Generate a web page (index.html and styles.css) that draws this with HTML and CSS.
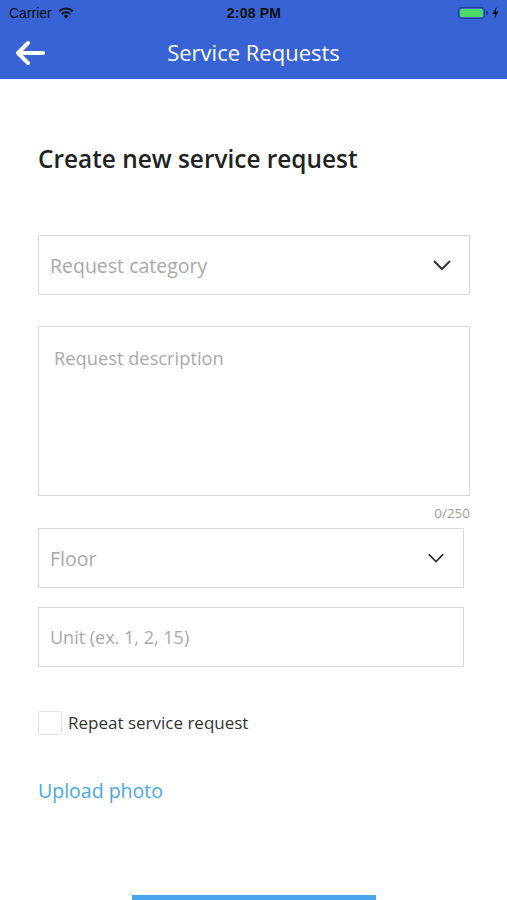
FILE: index.html
```html
<!DOCTYPE html>
<html>
<head>
<meta charset="utf-8">
<link rel="stylesheet" href="styles.css">
</head>
<body>
<header class="header">
  <div class="status">
    <div class="status-left">
      <span class="carrier">Carrier</span>
      <svg class="wifi" width="16" height="12" viewBox="0 0 16 12">
        <path d="M8 11.5 L5.6 8.9 A3.4 3.4 0 0 1 10.4 8.9 Z" fill="#111"/>
        <path d="M3.7 7 A6.2 6.2 0 0 1 12.3 7" stroke="#111" stroke-width="2" fill="none"/>
        <path d="M1.2 4.3 A9.8 9.8 0 0 1 14.8 4.3" stroke="#111" stroke-width="2" fill="none"/>
      </svg>
    </div>
    <div class="time">2:08 PM</div>
    <div class="status-right">
      <div class="battery"><div class="battery-fill"></div></div>
      <div class="battery-cap"></div>
      <svg class="bolt" width="7" height="12" viewBox="0 0 7 12">
        <path d="M4.5 0 L0.5 7 L3.2 7 L2.3 12 L6.5 4.6 L3.8 4.6 Z" fill="#111"/>
      </svg>
    </div>
  </div>
  <div class="nav">
    <svg class="back" width="32" height="26" viewBox="0 0 32 26">
      <path d="M29 13 L4 13 M14 3 L4 13 L14 23" stroke="#fff" stroke-width="4" fill="none" stroke-linecap="round" stroke-linejoin="round"/>
    </svg>
    <div class="nav-title">Service Requests</div>
  </div>
</header>
<main class="content">
  <h1 class="title">Create new service request</h1>
  <div class="field select wide">
    <span class="placeholder">Request category</span>
    <svg class="chevron" width="20" height="12" viewBox="0 0 20 12"><path d="M2 2 L10 10 L18 2" stroke="#333" stroke-width="2" fill="none"/></svg>
  </div>
  <div class="textarea">
    <span class="placeholder desc">Request description</span>
  </div>
  <div class="counter">0/250</div>
  <div class="field select narrow">
    <span class="placeholder">Floor</span>
    <svg class="chevron" width="20" height="12" viewBox="0 0 20 12"><path d="M2 2 L10 10 L18 2" stroke="#333" stroke-width="2" fill="none"/></svg>
  </div>
  <div class="field narrow unit">
    <span class="placeholder small">Unit (ex. 1, 2, 15)</span>
  </div>
  <label class="check-row">
    <span class="checkbox"></span>
    <span class="check-label">Repeat service request</span>
  </label>
  <div class="upload">Upload photo</div>
  <div class="bottom-bar"></div>
</main>
</body>
</html>
```
FILE: styles.css
```css
* { box-sizing: border-box; }
html, body { margin: 0; padding: 0; }
body {
  width: 507px;
  height: 900px;
  overflow: hidden;
  background: #fff;
  font-family: "Open Sans", "Noto Sans", sans-serif;
}
.header {
  background: #3763d5;
  height: 79px;
}
.status {
  height: 26px;
  display: flex;
  align-items: center;
  justify-content: space-between;
  padding: 0 8px 0 9px;
  font-family: "Liberation Sans", Arial, sans-serif;
  font-size: 14px;
  color: #111;
}
.status-left { display: flex; align-items: center; gap: 6px; width: 120px; }
.time { font-weight: bold; letter-spacing: 0.2px; }
.status-right { display: flex; align-items: center; justify-content: flex-end; width: 120px; }
.battery {
  width: 27px; height: 12px;
  border: 1px solid #1d3f8c;
  border-radius: 3px;
  padding: 1px;
}
.battery-fill { width: 100%; height: 100%; background: #4cd964; border-radius: 1.5px; }
.battery-cap { width: 2px; height: 4px; background: #1d3f8c; margin-left: 1px; border-radius: 0 1px 1px 0; }
.bolt { margin-left: 4px; }
.nav {
  height: 53px;
  display: flex;
  align-items: center;
  position: relative;
  padding-left: 14px;
}
.back { display: block; }
.nav-title {
  position: absolute;
  left: 0; right: 0;
  text-align: center;
  color: #fff;
  font-size: 22px;
  line-height: 28px;
  top: 12px;
  pointer-events: none;
}
.content {
  padding: 0 37px 0 38px;
  display: flex;
  flex-direction: column;
}
.title {
  margin: 64px 0 0 0;
  font-size: 24.4px;
  font-weight: 600;
  line-height: 32px;
  color: #222;
}
.field {
  height: 60px;
  border: 1.5px solid #d9d9d9;
  display: flex;
  align-items: center;
  justify-content: space-between;
  padding: 0 17px 0 11px;
}
.wide { margin-top: 60px; }
.narrow { margin-right: 6px; }
.placeholder {
  color: #a9a9a9;
  font-size: 19.5px;
}
.placeholder.small { font-size: 18px; }
.chevron { display: block; }
.select.narrow .chevron { width: 18px; }
.select.narrow { padding-right: 18px; }
.textarea {
  margin-top: 31px;
  height: 170px;
  border: 1.5px solid #d9d9d9;
  padding: 18px 15px;
}
.placeholder.desc { font-size: 18.3px; line-height: 26px; display: block; }
.counter {
  text-align: right;
  font-size: 13.5px;
  line-height: 16px;
  color: #9e9e9e;
  margin-top: 9px;
  margin-bottom: 7px;
}
.unit { margin-top: 19px; }
.check-row {
  margin-top: 44px;
  display: flex;
  align-items: center;
  gap: 6px;
}
.checkbox {
  width: 24px; height: 24px;
  border: 1.5px solid #e4e4e4;
  border-radius: 2px;
}
.check-label {
  font-size: 17px;
  color: #333;
  line-height: 24px;
}
.upload {
  margin-top: 43px;
  font-size: 19.5px;
  line-height: 26px;
  color: #4aa8e8;
}
.bottom-bar {
  margin-top: 91px;
  align-self: center;
  width: 244px;
  height: 8px;
  background: #47a6ec;
}
```
